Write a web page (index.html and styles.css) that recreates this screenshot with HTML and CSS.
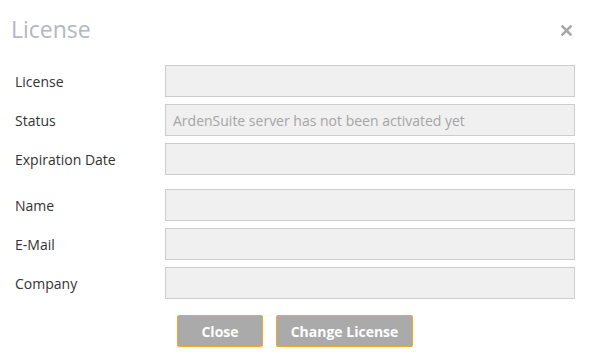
FILE: index.html
```html
<!DOCTYPE html>
<html lang="en">
<head>
  <meta charset="UTF-8">
  <title>License</title>
  <link rel="stylesheet" href="styles.css">
</head>
<body>
  <div class="modal">
    <div class="modal-header">
      <h2 class="modal-title">License</h2>
      <button class="close" type="button" aria-label="Close">
        <svg width="11" height="11" viewBox="0 0 11 11">
          <path d="M1.5 1.5 L9.5 9.5 M9.5 1.5 L1.5 9.5" stroke="currentColor" stroke-width="2.6" stroke-linecap="square"/>
        </svg>
      </button>
    </div>

    <form class="form">
      <label for="license">License</label>
      <input type="text" id="license" readonly>

      <label for="status">Status</label>
      <input type="text" id="status" value="ArdenSuite server has not been activated yet" readonly>

      <label for="expiration">Expiration Date</label>
      <input type="text" id="expiration" readonly>

      <label class="spaced" for="name">Name</label>
      <input class="spaced" type="text" id="name" readonly>

      <label for="email">E-Mail</label>
      <input type="text" id="email" readonly>

      <label for="company">Company</label>
      <input type="text" id="company" readonly>
    </form>

    <div class="modal-footer">
      <button class="btn btn-close" type="button">Close</button>
      <button class="btn btn-change" type="button">Change License</button>
    </div>
  </div>
</body>
</html>
```

FILE: styles.css
```css
* {
  box-sizing: border-box;
}

body {
  margin: 0;
  font-family: 'Open Sans', sans-serif;
  font-size: 14px;
  color: #333;
  background-color: #fff;
}

.modal {
  width: 589px;
  height: 356px;
}

.modal-header {
  display: flex;
  justify-content: space-between;
  align-items: center;
  padding: 14px 17px 0 11px;
  height: 44px;
}

.modal-title {
  margin: 0;
  font-size: 23px;
  font-weight: normal;
  line-height: 30px;
  color: #b2b8c0;
}

.close {
  display: flex;
  padding: 0;
  border: none;
  background: none;
  color: #a8a8a8;
  cursor: pointer;
  margin-top: 2px;
}

.form {
  display: grid;
  grid-template-columns: 150px 410px;
  row-gap: 7px;
  align-items: center;
  padding: 21px 0 0 15px;
}

label {
  font-size: 14px;
  color: #333;
}

input {
  height: 32px;
  padding: 0 7px;
  border: 1px solid #cccccc;
  background-color: #f0f0f0;
  font-family: 'Open Sans', sans-serif;
  font-size: 14px;
  color: #a5a5a5;
  outline: none;
}

.spaced {
  margin-top: 7px;
}

.modal-footer {
  display: flex;
  justify-content: center;
  gap: 13px;
  padding-top: 16px;
  padding-left: 1px;
}

.btn {
  height: 32px;
  padding: 0;
  border: 1px solid #f5a623;
  border-radius: 2px;
  background-color: #aaaaaa;
  color: #fff;
  font-family: 'Open Sans', sans-serif;
  font-size: 14px;
  font-weight: bold;
  white-space: nowrap;
  cursor: pointer;
}

.btn-close {
  width: 86px;
}

.btn-change {
  width: 137px;
}
```
